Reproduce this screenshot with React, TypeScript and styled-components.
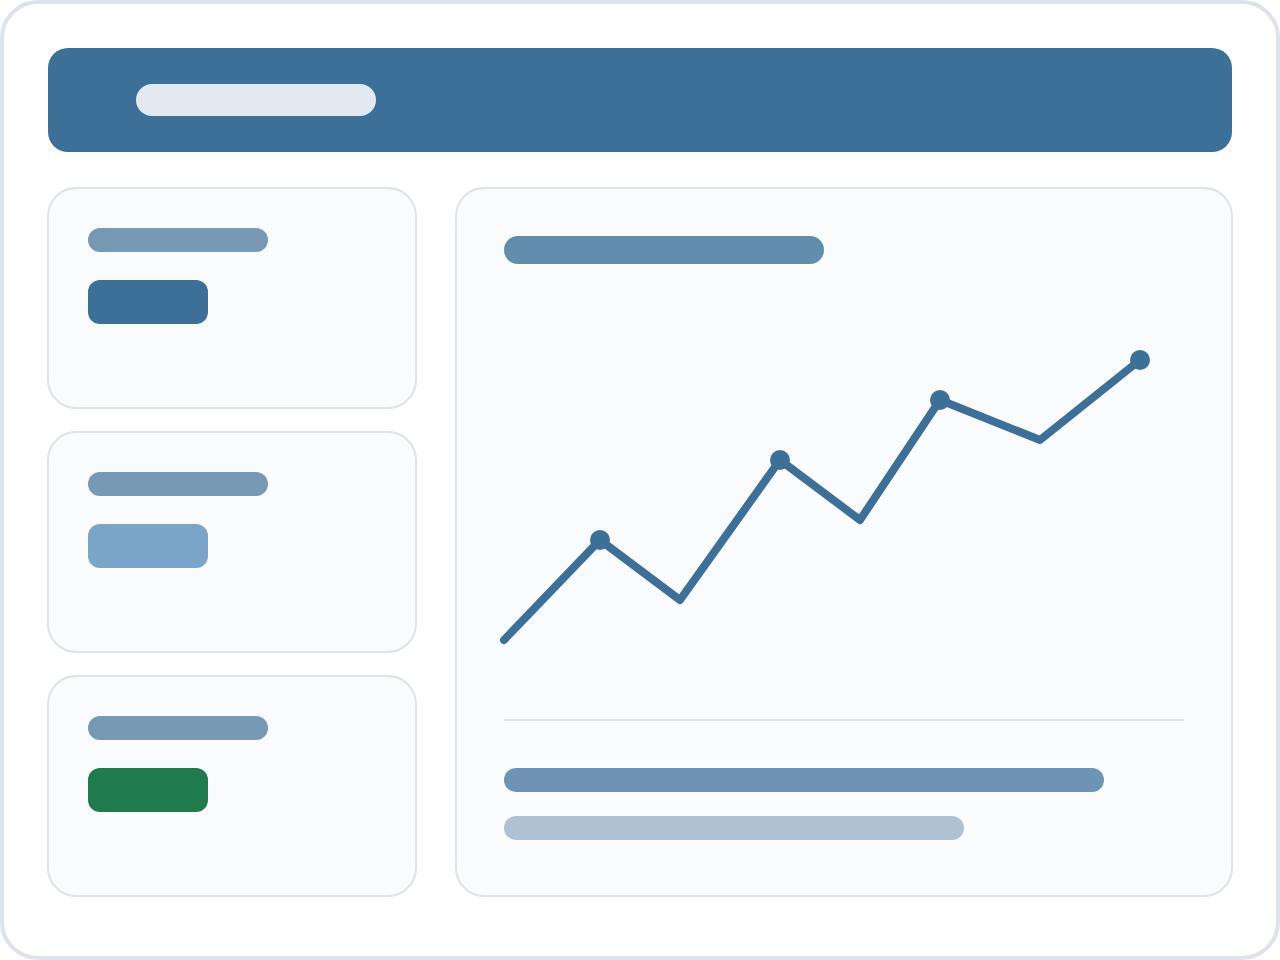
import React from "react";
import styled, { createGlobalStyle } from "styled-components";

const colors = {
  page: "#ffffff",
  surface: "#fafbfd",
  border: "#dde3ea",
  primary: "#3d7099",
  secondary: "#7ba5c8",
  success: "#1f7a4d",
};

const GlobalStyle = createGlobalStyle`
  *, *::before, *::after { box-sizing: border-box; }
  body {
    margin: 0;
    background: ${colors.page};
    font-family: "Liberation Sans", sans-serif;
  }
`;

const Frame = styled.div`
  display: flex;
  flex-direction: column;
  gap: 35px;
  min-height: 100vh;
  padding: 44px 43px 59px;
  border: 4px solid ${colors.border};
  border-radius: 38px;
  background: ${colors.page};
`;

const Header = styled.header`
  margin: 0 1px;
  padding: 36px 88px;
  border-radius: 20px;
  background: ${colors.primary};
`;

const Bar = styled.div<{ $width: number; $height: number; $color: string }>`
  width: ${(p) => p.$width}px;
  max-width: 100%;
  height: ${(p) => p.$height}px;
  border-radius: ${(p) => p.$height / 2}px;
  background: ${(p) => p.$color};
`;

const Content = styled.main`
  flex: 1;
  display: grid;
  grid-template-columns: 370px minmax(0, 1fr);
  gap: 38px;
`;

const CardList = styled.aside`
  display: grid;
  grid-auto-rows: 1fr;
  gap: 22px;
`;

const Surface = styled.section`
  display: flex;
  flex-direction: column;
  border: 2px solid ${colors.border};
  border-radius: 29px;
  background: ${colors.surface};
`;

const Card = styled(Surface)`
  gap: 28px;
  padding: 39px;
`;

const Swatch = styled.div<{ $color: string }>`
  width: 120px;
  height: 44px;
  border-radius: 12px;
  background: ${(p) => p.$color};
`;

const Panel = styled(Surface)`
  padding: 47px 47px 55px;
`;

const ChartArea = styled.div`
  flex: 1;
  padding-top: 76px;
`;

const Chart = styled.svg`
  display: block;
  width: 100%;
  height: auto;
  overflow: visible;
`;

const Divider = styled.hr`
  width: 100%;
  height: 2px;
  margin: 0 0 47px;
  border: 0;
  background: ${colors.border};
`;

const Summary = styled.div`
  display: flex;
  flex-direction: column;
  gap: 24px;
`;

const cards = [colors.primary, colors.secondary, colors.success];

const points = [
  { x: 0, y: 300 },
  { x: 96, y: 200, marked: true },
  { x: 176, y: 260 },
  { x: 276, y: 120, marked: true },
  { x: 356, y: 180 },
  { x: 436, y: 60, marked: true },
  { x: 536, y: 100 },
  { x: 636, y: 20, marked: true },
];

export default function App() {
  return (
    <>
      <GlobalStyle />
      <Frame>
        <Header>
          <Bar $width={240} $height={32} $color="#e2e9f0" />
        </Header>
        <Content>
          <CardList>
            {cards.map((color) => (
              <Card key={color}>
                <Bar $width={180} $height={24} $color="#7799b5" />
                <Swatch $color={color} />
              </Card>
            ))}
          </CardList>
          <Panel>
            <Bar $width={320} $height={28} $color="#638dad" />
            <ChartArea>
              <Chart viewBox="0 0 680 320" role="img" aria-label="Trend">
                <polyline
                  points={points.map((p) => `${p.x},${p.y}`).join(" ")}
                  fill="none"
                  stroke={colors.primary}
                  strokeWidth="8"
                  strokeLinecap="round"
                  strokeLinejoin="round"
                />
                {points
                  .filter((p) => p.marked)
                  .map((p) => (
                    <circle key={p.x} cx={p.x} cy={p.y} r="10" fill={colors.primary} />
                  ))}
              </Chart>
            </ChartArea>
            <Divider />
            <Summary>
              <Bar $width={600} $height={24} $color="#6d94b4" />
              <Bar $width={460} $height={24} $color="#aec2d3" />
            </Summary>
          </Panel>
        </Content>
      </Frame>
    </>
  );
}
